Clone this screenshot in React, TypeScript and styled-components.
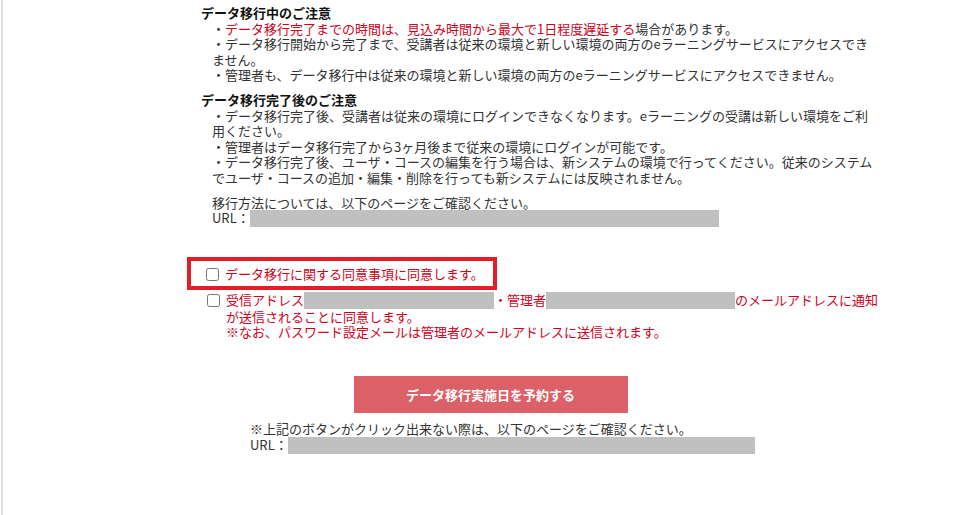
import React from 'react';
import styled, {createGlobalStyle} from 'styled-components';

const GlobalStyle = createGlobalStyle`
    html, body {
        margin: 0;
        padding: 0;
        background: #fff;
    }
    body {
        font-family: "Noto Sans CJK JP", "Liberation Sans", sans-serif;
        font-size: 13px;
        line-height: 15.6px;
        color: #333;
    }
`

function App() {
    return (
        <Page>
            <GlobalStyle/>
            <Content>
                <Notice>
                    <NoticeTitle>データ移行中のご注意</NoticeTitle>
                    <NoticeBody>
                        <Line>・<Alert>データ移行完了までの時間は、見込み時間から最大で1日程度遅延する</Alert>場合があります。</Line>
                        <Line>・データ移行開始から完了まで、受講者は従来の環境と新しい環境の両方のeラーニングサービスにアクセスできません。</Line>
                        <Line>・管理者も、データ移行中は従来の環境と新しい環境の両方のeラーニングサービスにアクセスできません。</Line>
                    </NoticeBody>
                </Notice>
                <Notice>
                    <NoticeTitle>データ移行完了後のご注意</NoticeTitle>
                    <NoticeBody>
                        <Line>・データ移行完了後、受講者は従来の環境にログインできなくなります。eラーニングの受講は新しい環境をご利用ください。</Line>
                        <Line>・管理者はデータ移行完了から3ヶ月後まで従来の環境にログインが可能です。</Line>
                        <Line>・データ移行完了後、ユーザ・コースの編集を行う場合は、新システムの環境で行ってください。従来のシステムでユーザ・コースの追加・編集・削除を行っても新システムには反映されません。</Line>
                    </NoticeBody>
                </Notice>
                <Notice>
                    <NoticeBody>
                        <Line>移行方法については、以下のページをご確認ください。</Line>
                        <Line>URL：<Masked $width={469}/></Line>
                    </NoticeBody>
                </Notice>
            </Content>

            <Agreements>
                <AgreeBox>
                    <CheckRow>
                        <Check type="checkbox"/>
                        <CheckText>データ移行に関する同意事項に同意します。</CheckText>
                    </CheckRow>
                </AgreeBox>
                <CheckRow $plain>
                    <Check type="checkbox"/>
                    <CheckText>
                        受信アドレス<Masked $width={190}/>・管理者<Masked $width={189}/>のメールアドレスに通知が送信されることに同意します。<br/>
                        ※なお、パスワード設定メールは管理者のメールアドレスに送信されます。
                    </CheckText>
                </CheckRow>
            </Agreements>

            <Actions>
                <ReserveButton type="button">データ移行実施日を予約する</ReserveButton>
            </Actions>
            <Help>
                <Line>※上記のボタンがクリック出来ない際は、以下のページをご確認ください。</Line>
                <Line>URL：<Masked $width={467}/></Line>
            </Help>
        </Page>
    );
}

const Page = styled.div`
    min-height: 515px;
    margin-left: 1px;
    border-left: 2px solid #ddd;
    padding-top: 5px;
    box-sizing: border-box;
`
const Content = styled.div`
    margin-left: 198px;
    width: 674px;
    display: flex;
    flex-direction: column;
    gap: 9px;
`
const Notice = styled.div`
    display: flex;
    flex-direction: column;
`
const NoticeTitle = styled.div`
    font-weight: bold;
    color: #111;
`
const NoticeBody = styled.div`
    padding-left: 11px;
`
const Line = styled.div`
    white-space: normal;
`
const Alert = styled.span`
    color: #d0021b;
`
const Masked = styled.span<{ $width: number }>`
    display: inline-block;
    vertical-align: top;
    width: ${p => p.$width}px;
    height: 17px;
    background: #c0c0c0;
`
const Agreements = styled.div`
    margin-top: 30px;
    margin-left: 184px;
    width: 693px;
`
const AgreeBox = styled.div`
    width: 310px;
    box-sizing: border-box;
    border: 4px solid #e41e26;
    padding: 5px 0 4px 15px;
`
const CheckRow = styled.label<{ $plain?: boolean }>`
    display: flex;
    align-items: flex-start;
    gap: 6px;
    color: #d0021b;
    padding-left: ${p => (p.$plain ? '20px' : '0')};
    margin-top: ${p => (p.$plain ? '2px' : '0')};
`
const Check = styled.input`
    flex: none;
    width: 13px;
    height: 13px;
    margin: 2px 0 0 0;
`
const CheckText = styled.div`
    flex: 1;
`
const Actions = styled.div`
    display: flex;
    justify-content: center;
    padding-left: 2px;
    margin-top: 36px;
`
const ReserveButton = styled.button`
    width: 274px;
    height: 37px;
    border: 0;
    background-color: #dc6068;
    color: #fff;
    font-family: "Noto Sans CJK JP", "Liberation Sans", sans-serif;
    font-size: 13px;
    font-weight: bold;
    cursor: pointer;
`
const Help = styled.div`
    margin-top: 8px;
    margin-left: 247px;
`

export default App;
